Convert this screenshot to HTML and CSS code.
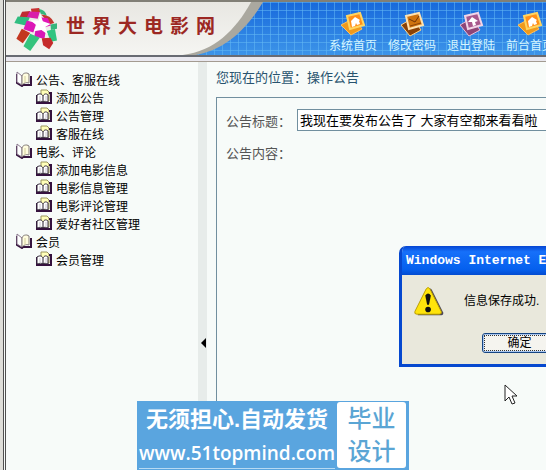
FILE: index.html
```
<!DOCTYPE html>
<html lang="zh-CN">
<head>
  <meta charset="UTF-8">
  <meta name="viewport" content="width=device-width, initial-scale=1.0">
  <title>世界大电影网</title>
  <link rel="stylesheet" href="styles.css">
</head>
<body>
  <svg class="symbols" aria-hidden="true">
    <symbol id="book" viewBox="0 0 16 16">
      <path d="M1 3v9l5 3 1-1h8V5" fill="#fff" stroke="#37143f" stroke-width="2"/>
      <path d="M1 1l5 4v9l-5-3z" fill="#fff" stroke="#8a788e"/>
      <path d="M6 5c1-3 3-3 5-3l2 1v9c-3-1-5 0-7 2z" fill="#fffde0" stroke="#827a79"/>
      <path d="M9 5v7" stroke="#d3cf9c"/>
    </symbol>
    <symbol id="page" viewBox="0 0 16 16">
      <path d="M5 1h6l2 2v9H5z" fill="#ffffb9" stroke="#9c965f"/>
      <path d="M1 6v8h14V4h-2" fill="none" stroke="#35113e" stroke-width="2"/>
      <path d="M1 6c3-2 5-1 6 1 1-2 3-3 5-1v7c-2-1-4-1-5 0-1-1-4-1-6 0z" fill="#fff" stroke="#352b3c"/>
      <path d="M7 7v6" stroke="#251a2b"/>
      <path d="M4 7v4M10 7v4" stroke="#c9c5cf"/>
    </symbol>
    <symbol id="home" viewBox="0 0 26 26">
      <path d="M1 14L14 7l8 11-11 6z" fill="#f09a1c" stroke="#ffc05c"/>
      <path d="M7 5l13-3 4 12-14 4z" fill="#ff8f18" stroke="#ffd560" stroke-width="2"/>
      <path d="M11 10l4-4 5 3-1 1 1 3-3 1-1-2-1 3-3 1z" fill="#fff"/>
    </symbol>
    <symbol id="mail" viewBox="0 0 26 26">
      <path d="M2 14L14 7l8 12-11 6z" fill="#8b4208" stroke="#ffd48a"/>
      <path d="M7 5l13-3 4 12-14 4z" fill="#cf730f" stroke="#ffe2b0" stroke-width="2"/>
      <path d="M10 8l6 3 4-6" fill="none" stroke="#713509"/>
      <path d="M11 15l11-3" stroke="#8b4208"/>
    </symbol>
    <symbol id="exit" viewBox="0 0 26 26">
      <path d="M2 14L14 7l8 12-11 6z" fill="#8e4577" stroke="#e9bdd8"/>
      <path d="M7 5l13-3 4 12-14 4z" fill="#a8588c" stroke="#f2d5e7" stroke-width="2"/>
      <path d="M10 11l4-5 6 4-3 1 1 3-3 1-1-4z" fill="#fff"/>
    </symbol>
  </svg>

  <header class="header">
    <div class="brand">
      <svg class="curve" viewBox="0 0 262 52" preserveAspectRatio="none" aria-hidden="true">
        <defs>
          <linearGradient id="silver" x2="0" y2="1">
            <stop offset="0" stop-color="#e8e7e2"/>
            <stop offset="1" stop-color="#f5f5f2"/>
          </linearGradient>
        </defs>
        <path d="M0 0h259C240 31 216 50 184 53H0z" fill="#aaa89f"/>
        <path d="M0 0h247C231 28 210 48 178 52H0z" fill="url(#silver)"/>
      </svg>
      <svg class="logo" viewBox="42 20 130 130" aria-hidden="true">
        <path d="M66 34l24-2-4 20-28-1z" fill="#c02b33"/>
        <path d="M92 25l24-2 6 12-28 2z" fill="#c93232"/>
        <path d="M88 33l30 2-6 20-32-5z" fill="#d91da9"/>
        <path d="M116 26q18 2 23 20l-18-6z" fill="#36b57c"/>
        <path d="M53 48l36 3-12 24-34-8z" fill="#2fbd80"/>
        <path d="M122 42q29 1 39 25l-13 4z" fill="#c2382f"/>
        <path d="M120 50l22 3 9 22-16 4z" fill="#e316b8"/>
        <path d="M80 60l28 8-9 27-29-9z" fill="#dc18b7"/>
        <path d="M150 72l19-4v16l-18 4z" fill="#36b57c"/>
        <path d="M65 84l25 13-22 30-19-13z" fill="#c33620"/>
        <path d="M106 84l30 6-4 24-30-6z" fill="#d719b6"/>
        <path d="M90 99l28 12-28 39-20-14z" fill="#35c37d"/>
        <path d="M138 91l25-6 6 34-18 4z" fill="#31c480"/>
        <path d="M124 112l26-1 8 15-12 19-18-12z" fill="#c52b2b"/>
        <path d="M120 40l7 22 23 8-16 9 8 22-19-13-22 4 7-18-17-15 24 1z" fill="#fff"/>
      </svg>
      <h1><span>世</span><span>界</span><span>大</span><span>电</span><span>影</span><span>网</span></h1>
    </div>
    <nav class="top-nav">
      <a href="#"><svg><use href="#home"/></svg>系统首页</a>
      <a href="#"><svg><use href="#mail"/></svg>修改密码</a>
      <a href="#"><svg><use href="#exit"/></svg>退出登陆</a>
      <a href="#"><svg><use href="#home"/></svg>前台首页</a>
    </nav>
  </header>

  <div class="layout">
    <nav class="sidebar">
      <ul class="menu">
        <li><a href="#"><svg><use href="#book"/></svg>公告、客服在线</a>
          <ul>
            <li><a href="#"><svg><use href="#page"/></svg>添加公告</a></li>
            <li><a href="#"><svg><use href="#page"/></svg>公告管理</a></li>
            <li><a href="#"><svg><use href="#page"/></svg>客服在线</a></li>
          </ul>
        </li>
        <li><a href="#"><svg><use href="#book"/></svg>电影、评论</a>
          <ul>
            <li><a href="#"><svg><use href="#page"/></svg>添加电影信息</a></li>
            <li><a href="#"><svg><use href="#page"/></svg>电影信息管理</a></li>
            <li><a href="#"><svg><use href="#page"/></svg>电影评论管理</a></li>
            <li><a href="#"><svg><use href="#page"/></svg>爱好者社区管理</a></li>
          </ul>
        </li>
        <li><a href="#"><svg><use href="#book"/></svg>会员</a>
          <ul>
            <li><a href="#"><svg><use href="#page"/></svg>会员管理</a></li>
          </ul>
        </li>
      </ul>
    </nav>
    <button class="splitter" type="button" aria-label="收起菜单"><svg viewBox="0 0 5 10"><path d="M5 0v10L0 5z"/></svg></button>
    <main class="content">
      <p class="location">您现在的位置：操作公告</p>
      <form class="notice-form">
        <div class="row">
          <label for="title">公告标题：</label>
          <input type="text" id="title" value="我现在要发布公告了 大家有空都来看看啦">
        </div>
        <div class="row">
          <span>公告内容：</span>
        </div>
      </form>
    </main>
  </div>

  <section class="dialog" role="alertdialog" aria-labelledby="dialogTitle" aria-describedby="dialogText">
    <h2 id="dialogTitle">Windows Internet Explorer</h2>
    <div class="dialog-body">
      <div class="message">
        <svg viewBox="0 0 32 32" aria-hidden="true">
          <path d="M15 3q2-3 4 0l12 24q1 3-2 3H4z" fill="#4b4657"/>
          <path d="M13 2q2-3 4 0l12 24q1 3-2 3H3q-3 0-2-3z" fill="#ffe40b" stroke="#b69b00"/>
          <path d="M12 9q3-4 6 0l-2 10h-2z" fill="#111"/>
          <circle cx="15" cy="24" r="3" fill="#111"/>
        </svg>
        <p id="dialogText">信息保存成功.</p>
      </div>
      <button class="ok" type="button"><span>确定</span></button>
    </div>
  </section>

  <svg class="cursor" viewBox="0 0 13 21" aria-hidden="true">
    <path d="M1 1v16l4-4 3 7 3-1-3-7h5z" fill="#fff" stroke="#222"/>
  </svg>

  <aside class="watermark">
    <div class="promo">
      <strong>无须担心.自动发货</strong>
      <a href="#">www.51topmind.com</a>
    </div>
    <div class="badge">毕业<br>设计</div>
  </aside>
</body>
</html>
```

FILE: styles.css
```
* {
  box-sizing: border-box;
}
body {
  display: flex;
  flex-direction: column;
  min-height: 100vh;
  margin: 0 0 0 3px;
  border-left: 3px double #505050;
  overflow: hidden;
  background-color: #f7fbf9;
  color: #000;
  font-family: "Liberation Sans", "Noto Sans CJK SC", sans-serif;
  font-size: 12px;
}
html {
  background-color: #deded9;
}
.symbols {
  position: absolute;
  width: 0;
  height: 0;
}
a {
  color: inherit;
  text-decoration: none;
}
ul {
  margin: 0;
  padding: 0;
  list-style: none;
}
.header {
  display: flex;
  justify-content: space-between;
  height: 62px;
  border-top: 2px solid #817f76;
  border-bottom: 1px solid #a39b91;
  box-shadow: inset 0 -4px #e9e8ef, inset 0 -6px #686b73;
  background-color: #267de2;
  background-image: linear-gradient(#65baf488 1px, transparent 1px), linear-gradient(90deg, #65baf488 1px, transparent 1px), linear-gradient(#1769dc, #4199ea);
  background-size: 8px 8px, 8px 8px, 100% 100%;
}
.brand {
  position: relative;
  display: flex;
  align-items: center;
  gap: 8px;
  width: 260px;
  height: 53px;
  padding-left: 8px;
}
.curve {
  position: absolute;
  top: 0;
  left: 0;
  width: 100%;
  height: 100%;
}
.logo {
  position: relative;
  width: 44px;
  height: 44px;
}
h1 {
  position: relative;
  display: flex;
  gap: 7px;
  margin: 0;
  padding-bottom: 8px;
  color: #9c2823;
  font-family: "Liberation Serif", "Noto Sans CJK SC", serif;
  font-size: 19px;
  white-space: nowrap;
}
.top-nav {
  display: flex;
  gap: 11px;
  margin-right: -8px;
  padding-top: 9px;
  color: #d6f6ff;
}
.top-nav a {
  display: flex;
  flex-direction: column;
  align-items: center;
  width: 48px;
  line-height: 18px;
  white-space: nowrap;
}
.top-nav svg {
  width: 26px;
  height: 26px;
}
.layout {
  display: flex;
  flex: 1;
}
.sidebar {
  flex: 0 0 192px;
  padding: 8px 0 0 10px;
}
.menu a {
  display: flex;
  align-items: center;
  gap: 4px;
  height: 18px;
}
.menu ul {
  padding-left: 20px;
}
.menu svg {
  width: 16px;
  height: 16px;
}
.splitter {
  display: flex;
  align-items: center;
  justify-content: flex-end;
  width: 9px;
  padding: 154px 1px 0 0;
  border: 0;
  background-color: #e7ecea;
}
.splitter svg {
  width: 5px;
  height: 10px;
}
.content {
  display: flex;
  flex: 1;
  flex-direction: column;
  min-width: 0;
  padding: 6px 0 0 9px;
}
.location {
  margin: 0;
  color: #28536e;
  font-size: 13px;
  line-height: 20px;
}
.notice-form {
  flex: 1;
  margin-top: 9px;
  padding: 6px 0 0 9px;
  border: 1px solid #718f9f;
  border-width: 1px 0 0 1px;
}
.row {
  display: flex;
  align-items: center;
  height: 32px;
  color: #555;
  font-size: 13px;
}
.row label {
  flex: 0 0 71px;
}
.row input {
  flex: 1;
  min-width: 0;
  height: 22px;
  padding: 0 2px 2px;
  border: 1px solid #718f9f;
  border-right: 0;
  background-color: #fff;
  color: #000;
  font: inherit;
}
/* alert window, runs off the right edge */
.dialog {
  position: absolute;
  top: 246px;
  left: 399px;
  right: 0;
  overflow: hidden;
  border: 3px solid #0648cf;
  border-width: 0 0 3px 3px;
  border-radius: 7px 0 0 0;
  background-color: #e9e8dc;
}
.dialog h2 {
  margin: 0;
  padding-left: 4px;
  background: linear-gradient(#0645d2, #1670fa 20%, #0560ee 80%, #034bd0);
  color: #fff;
  font-family: "Liberation Mono", monospace;
  font-size: 13px;
  line-height: 29px;
  white-space: nowrap;
}
.dialog-body {
  padding: 12px 0 11px 12px;
}
.message {
  display: flex;
  align-items: flex-start;
  gap: 20px;
  height: 46px;
}
.message svg {
  width: 30px;
  height: 30px;
}
.message p {
  margin: 0;
  line-height: 28px;
  white-space: nowrap;
}
.ok {
  display: block;
  width: 75px;
  height: 20px;
  margin-left: 68px;
  padding: 1px;
  border: 1px solid #164583;
  border-radius: 3px;
  box-shadow: inset 0 0 0 1px #a9c6ef;
  background-color: #f5f4ef;
  color: #000;
  font: inherit;
}
.ok span {
  display: block;
  border: 1px dotted #333;
  line-height: 14px;
}
.cursor {
  position: absolute;
  top: 384px;
  left: 504px;
  width: 13px;
  height: 21px;
}
/* banner over the page */
.watermark {
  position: absolute;
  top: 401px;
  left: 137px;
  display: flex;
  width: 272px;
  height: 69px;
  padding: 1px 3px 2px 0;
  background-color: #5aa5df;
  color: #fff;
}
.promo {
  display: flex;
  flex: 1;
  flex-direction: column;
  align-items: center;
  white-space: nowrap;
}
.promo strong {
  font-size: 22px;
  line-height: 36px;
}
.promo a {
  border-bottom: 1px solid #b7daf3;
  font-family: "Open Sans", sans-serif;
  font-size: 19px;
  font-weight: 600;
  line-height: 30px;
}
.badge {
  width: 69px;
  border-radius: 3px;
  background-color: #fff;
  color: #5aa5d4;
  font-size: 24px;
  font-weight: 500;
  line-height: 33px;
  text-align: center;
}
```
